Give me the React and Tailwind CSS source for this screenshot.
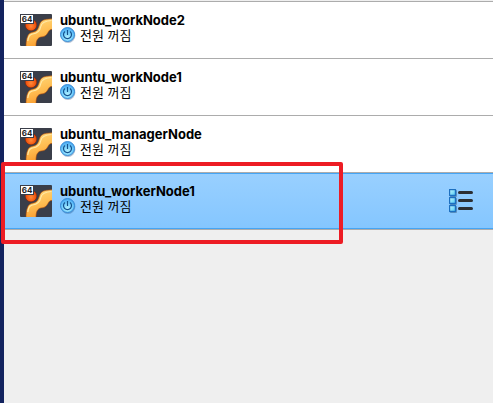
const machines = [
  { id: 1, name: "ubuntu_workNode2", state: "전원 꺼짐" },
  { id: 2, name: "ubuntu_workNode1", state: "전원 꺼짐" },
  { id: 3, name: "ubuntu_managerNode", state: "전원 꺼짐" },
  { id: 4, name: "ubuntu_workerNode1", state: "전원 꺼짐", selected: true },
];

// "64" badge over the orange ball and ribbon
const OsIcon = ({ id }) => (
  <div className="relative w-8 h-8 shrink-0">
    <svg viewBox="0 0 32 32" className="w-8 h-8" aria-hidden="true">
      <defs>
        <radialGradient id={`ball${id}`} cx="0.5" cy="0.6" r="0.6">
          <stop offset="0" stopColor="#ff8a3a" />
          <stop offset="0.6" stopColor="#f25a12" />
          <stop offset="1" stopColor="#c8380a" />
        </radialGradient>
        <linearGradient id={`ribbon${id}`} x1="0.3" y1="0" x2="0.6" y2="1">
          <stop offset="0" stopColor="#ffd878" />
          <stop offset="0.55" stopColor="#ffbc50" />
          <stop offset="1" stopColor="#f99a2c" />
        </linearGradient>
      </defs>
      <rect width="32" height="32" rx="1" fill="#3a3e49" />
      <circle cx="11" cy="11" r="5.8" fill={`url(#ball${id})`} stroke="#7a2408" strokeWidth="0.5" />
      <path
        d="M6 32.500C6 27 7 21.500 9.500 19.500C12 17.500 15 18.500 17 16C19.500 13 19 9.500 21.500 7.200C24 5 28 5.200 32.500 4.800V15.500C30 15 29 16.500 28 18.500C26.500 21.500 24 23 21 23C18 23.500 16 26 16 32.500Z"
        fill={`url(#ribbon${id})`}
        stroke="#a8480c"
        strokeWidth="0.6"
      />
      <path d="M7.800 27C8.200 22.500 10 20.500 12.500 20C17 19.500 20 17 20.800 12.500C21.500 8.500 24.500 7 31.500 6.500" fill="none" stroke="#ffe9a8" strokeWidth="1.200" />
    </svg>
    <span className="absolute left-0 top-0 w-[14px] h-[10px] bg-white border border-[#3a3e49] text-[8px] leading-[8px] font-bold text-center text-[#222]">
      64
    </span>
  </div>
);

const PowerIcon = ({ id }) => (
  <svg viewBox="0 0 16 16" className="w-4 h-4 shrink-0" aria-hidden="true">
    <defs>
      <radialGradient id={`power${id}`} cx="0.5" cy="0.7" r="0.65">
        <stop offset="0" stopColor="#b0f0ff" />
        <stop offset="0.6" stopColor="#70ccfc" />
        <stop offset="1" stopColor="#4aa8f0" />
      </radialGradient>
    </defs>
    <circle cx="8" cy="8.500" r="7.400" fill="#1c4c86" opacity="0.35" />
    <circle cx="7.500" cy="7.500" r="7" fill={`url(#power${id})`} stroke="#2f86d4" strokeWidth="0.9" />
    <path d="M5 4.500A4 4 0 1 0 10 4.500M7.500 3V8" fill="none" stroke="#14508c" strokeWidth="1.200" />
  </svg>
);

const MenuIcon = () => (
  <svg viewBox="0 0 24 24" className="w-6 h-6" aria-hidden="true">
    <defs>
      <linearGradient id="box" x1="0" y1="0" x2="1" y2="1">
        <stop offset="0" stopColor="#c4f8ff" />
        <stop offset="1" stopColor="#4cc8f4" />
      </linearGradient>
    </defs>
    {[0, 8, 16].map((y) => (
      <g key={y}>
        <rect x="1" y={y + 1} width="7" height="7" rx="1" fill="#3d5f80" opacity="0.5" />
        <rect x="0.500" y={y + 0.5} width="6" height="6" rx="0.500" fill="url(#box)" stroke="#1c6fc0" strokeWidth="1.400" />
        <rect x="9" y={y + 2} width="15" height="3" rx="1.500" fill="#2b2e33" />
      </g>
    ))}
  </svg>
);

const MachineRow = ({ machine }) => (
  <li
    className={
      machine.selected
        ? "relative flex items-center gap-2 h-[57px] pl-4 pr-5 border-b border-[#acacac] inset-shadow-[0_1px_#45a5f5,0_-1px_#45a5f5] bg-linear-to-b from-[#99d0ff] to-[#84c6ff]"
        : "flex items-center gap-2 h-[57px] pl-4 pr-5 border-b border-[#acacac] bg-white"
    }
  >
    <OsIcon id={machine.id} />
    <div className="flex-1 min-w-0 pb-1">
      <h3 className="text-[13px] leading-[14px] font-bold">{machine.name}</h3>
      <p className="flex items-center gap-1 text-[13px] leading-[14px]">
        <PowerIcon id={machine.id} />
        {machine.state}
      </p>
    </div>
    {machine.selected && (
      <>
        <button type="button" aria-label="Menu">
          <MenuIcon />
        </button>
        {/* Red highlight frame */}
        <div className="absolute -left-[3px] -top-[11px] w-[342px] h-[82px] border-4 border-[#ed1c24] rounded-xs pointer-events-none" />
      </>
    )}
  </li>
);

const App = () => (
  <div className="min-h-screen pt-px bg-[#efefef] border-l-4 border-[#13235f] text-black font-['Inter','Noto_Sans_CJK_KR',sans-serif]">
    <ul className="border-t border-[#acacac]">
      {machines.map((machine) => (
        <MachineRow key={machine.id} machine={machine} />
      ))}
    </ul>
  </div>
);

export default App;
